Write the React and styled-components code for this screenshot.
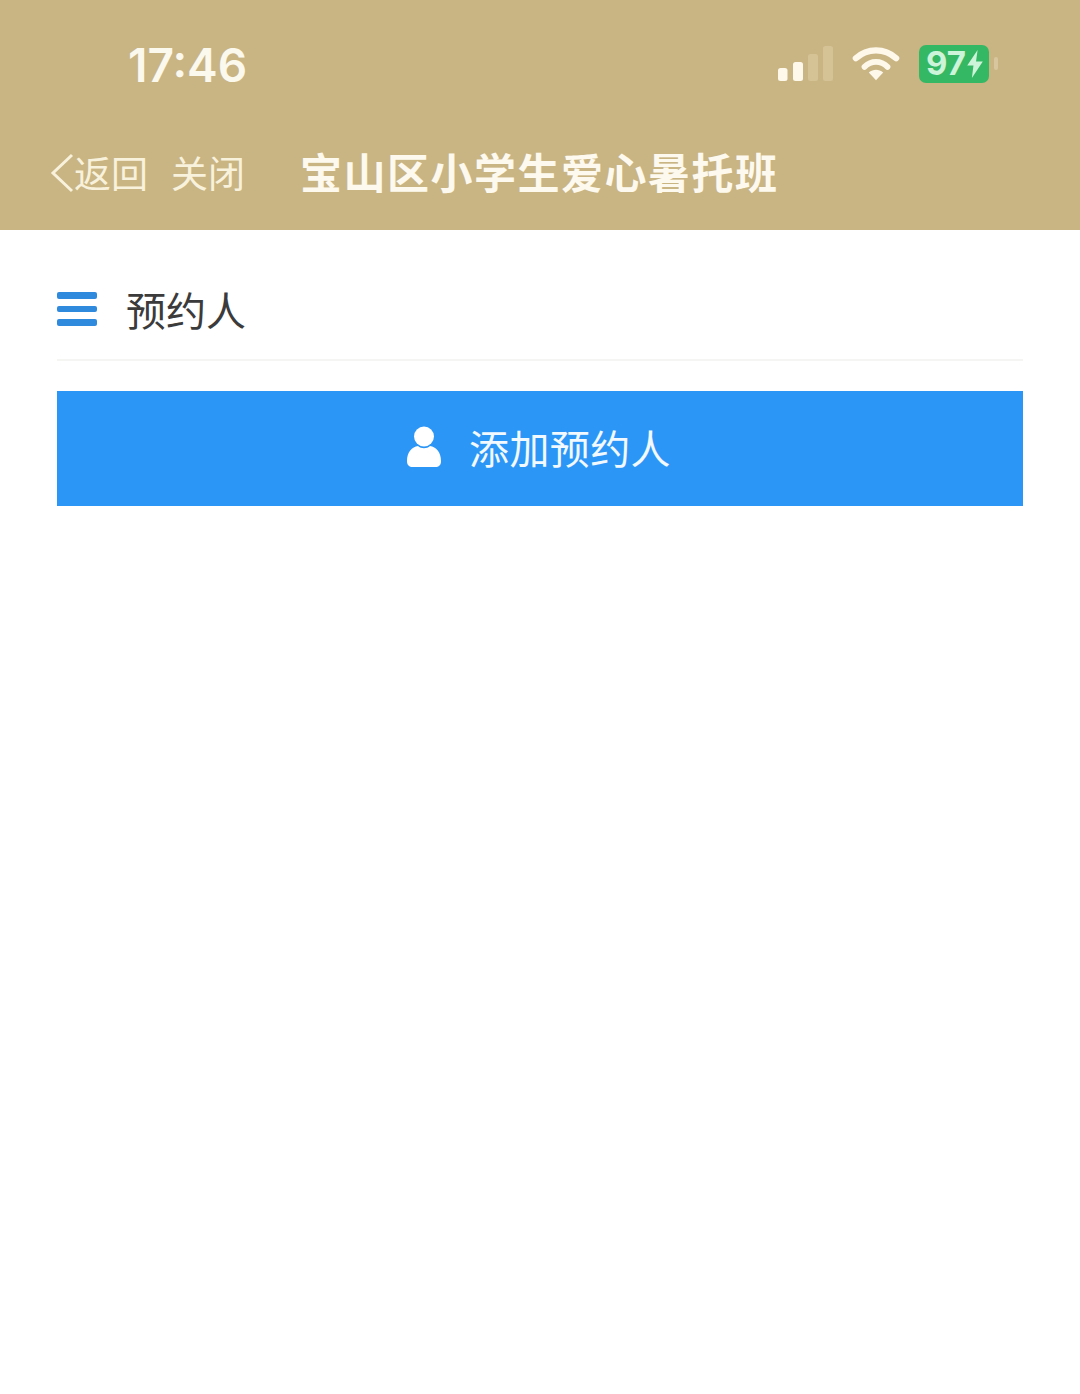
import React from "react";
import styled, { createGlobalStyle } from "styled-components";

const Global = createGlobalStyle`
  html, body { margin: 0; padding: 0; background: #fff; }
  body { font-family: "Noto Sans CJK SC", "Noto Sans", sans-serif; }
`;
const Page = styled.div`
  width: 1080px;
  height: 1394px;
  background: #fff;
  overflow: hidden;
`;
const Header = styled.header`
  height: 230px;
  background: #c9b483;
  display: flex;
  flex-direction: column;
`;
const StatusBar = styled.div`
  height: 130px;
  display: flex;
  align-items: center;
  padding: 0 82px 0 128px;
`;
const Time = styled.div`
  font-family: Inter, "Liberation Sans", sans-serif;
  font-size: 46px;
  font-weight: 600;
  line-height: 1;
  color: #fbf8ee;
`;
const StatusIcons = styled.div`
  margin-left: auto;
  margin-top: -3px;
  display: flex;
  align-items: center;
`;
const SignalIcon = styled.svg`
  display: block;
  margin-right: 19px;
`;
const WifiIcon = styled.svg`
  display: block;
`;
const Battery = styled.div`
  position: relative;
  width: 70px;
  height: 38px;
  margin-left: 19px;
  margin-right: 9px;
  border-radius: 7px;
  background: #35b864;
  color: #cdf3d9;
  display: flex;
  align-items: center;
  padding-left: 7px;
  box-sizing: border-box;
  font-family: Inter, "Liberation Sans", sans-serif;
  font-size: 33px;
  font-weight: 700;
  line-height: 1;
  gap: 1px;
  svg { flex: none; }
  &::after {
    content: "";
    position: absolute;
    right: -9px;
    top: 12px;
    width: 4px;
    height: 13px;
    border-radius: 2px;
    background: #d8c79e;
  }
`;
const NavBar = styled.div`
  height: 100px;
  display: flex;
  align-items: flex-start;
  padding: 0 0 0 50px;
`;
const BackIcon = styled.svg`
  width: 24px;
  height: 40px;
  margin-top: 23px;
  flex: none;
`;
const NavLink = styled.span`
  font-size: 37px;
  font-weight: 400;
  line-height: 44px;
  margin-top: 20px;
  color: #f8f1dc;
  margin-left: ${p => p.$gap}px;
`;
const Title = styled.h1`
  margin: 18px 0 0 55px;
  font-size: 42px;
  line-height: 46px;
  font-weight: 700;
  letter-spacing: 1.5px;
  color: #fdf9ee;
  white-space: nowrap;
`;
const Content = styled.main`
  padding: 0 57px;
`;
const SectionHead = styled.div`
  height: 100px;
  padding-top: 29px;
  border-bottom: 2px solid #f5f5f3;
  display: flex;
  align-items: center;
  gap: 29px;
`;
const Menu = styled.div`
  width: 40px;
  display: flex;
  flex-direction: column;
  gap: 7px;
`;
const MenuBar = styled.span`
  height: 6.5px;
  border-radius: 2px;
  background: #2f8ade;
`;
const SectionTitle = styled.h2`
  margin: 0;
  font-size: 40px;
  line-height: 48px;
  font-weight: 400;
  color: #3b3b3b;
`;
const AddButton = styled.button`
  width: 966px;
  height: 115px;
  margin-top: 30px;
  border: 0;
  padding: 0 2px 4px 0;
  background: #2c96f7;
  color: #f2f9ff;
  font-family: inherit;
  font-size: 40px;
  letter-spacing: 0.4px;
  font-weight: 400;
  display: flex;
  align-items: center;
  justify-content: center;
  gap: 28px;
`;

const Signal = () => (
  <SignalIcon width="55" height="36" viewBox="0 0 55 36">
    <rect x="0" y="22" width="9.5" height="13" rx="2.5" fill="#fdf8ea" />
    <rect x="15" y="16" width="10" height="19" rx="2.5" fill="#fdf8ea" />
    <rect x="30" y="8" width="10" height="27" rx="2.5" fill="#d5c396" />
    <rect x="45" y="0" width="10" height="35" rx="2.5" fill="#d5c396" />
  </SignalIcon>
);
const Wifi = () => (
  <WifiIcon width="48" height="37" viewBox="0 0 50 37" fill="none">
    <path d="M4 13 C16 2 34 2 46 13" stroke="#fdf8ea" strokeWidth="6.5" strokeLinecap="round" />
    <path d="M13 22 C20 15 30 15 37 22" stroke="#fdf8ea" strokeWidth="6" strokeLinecap="round" />
    <path d="M17.5 28 C22 24 28 24 32.5 28 L25 36 Z" fill="#fdf8ea" />
  </WifiIcon>
);
const Bolt = () => (
  <svg width="16" height="28" viewBox="0 0 15 27">
    <path d="M10 0 L0 15 H6 L4.5 27 L15 11 H8.5 Z" fill="#cdf3d9" />
  </svg>
);
const Person = () => (
  <svg width="34" height="42" viewBox="0 0 34 42">
    <circle cx="17" cy="10.5" r="10" fill="#fff" />
    <path d="M0 35 C0 26 5 21 11 20 C14 23 20 23 23 20 C29 21 34 26 34 35 C34 39 32 41 28 41 H6 C2 41 0 39 0 35 Z" fill="#fff" />
  </svg>
);

export default function App() {
  return (
    <Page>
      <Global />
      <Header>
        <StatusBar>
          <Time>17:46</Time>
          <StatusIcons>
            <Signal />
            <Wifi />
            <Battery>97<Bolt /></Battery>
          </StatusIcons>
        </StatusBar>
        <NavBar>
          <BackIcon viewBox="0 0 24 40" fill="none">
            <path d="M22 2 L3 20 L22 38" stroke="#f8f1dc" strokeWidth="3" />
          </BackIcon>
          <NavLink $gap={0}>返回</NavLink>
          <NavLink $gap={23}>关闭</NavLink>
          <Title>宝山区小学生爱心暑托班</Title>
        </NavBar>
      </Header>
      <Content>
        <SectionHead>
          <Menu>
            <MenuBar />
            <MenuBar />
            <MenuBar />
          </Menu>
          <SectionTitle>预约人</SectionTitle>
        </SectionHead>
        <AddButton>
          <Person />
          添加预约人
        </AddButton>
      </Content>
    </Page>
  );
}
